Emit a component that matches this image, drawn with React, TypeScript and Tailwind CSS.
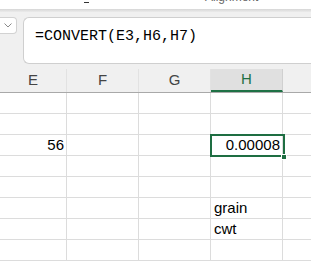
import React from "react";

const cols = ["E", "F", "G", "H"];
const rows: Record<number, Record<string, string>> = {
  2: { E: "56", H: "0.00008" },
  5: { H: "grain" },
  6: { H: "cwt" },
};

export default function App() {
  return (
    <div
      className="w-[311px] h-[265px] overflow-hidden bg-white relative"
      style={{ fontFamily: '"Liberation Sans", Arial, sans-serif' }}
    >
      {/* ribbon remnant */}
      <div className="h-[9px] bg-white relative overflow-hidden">
        <div className="absolute left-[84px] top-[2px] w-[5px] h-[1px] bg-[#333]" />
        <div className="absolute left-[205px] top-[-9px] text-[12px] text-[#666] leading-none">Alignment</div>
      </div>
      <div className="h-[3px] bg-gradient-to-b from-[#d6d6d6] to-[#ebebeb]" />
      {/* formula bar */}
      <div className="bg-[#f0f0f0] h-[57px] pt-[5px] flex items-start">
        <div className="w-[17px] h-[17px] bg-white border border-l-0 border-[#d2d2d2] rounded-r-[4px] flex items-center justify-center">
          <svg width="8" height="5" viewBox="0 0 8 5">
            <path d="M0.5 0.5 L4 4 L7.5 0.5" fill="none" stroke="#8a8a8a" strokeWidth="1" />
          </svg>
        </div>
        <div className="ml-[6px] flex-1 h-[47px] bg-white border border-r-0 border-[#cfcfcf] rounded-l-[6px] pl-[11px] pt-[5px]">
          <span
            className="text-[15px] text-black leading-[20px]"
            style={{ fontFamily: '"Liberation Mono", "DejaVu Sans Mono", monospace' }}
          >
            =CONVERT(<span className="text-black">E3,H6,H7</span>)
          </span>
        </div>
      </div>
      {/* headers */}
      <div className="flex h-[24px] bg-[#f0f0f0] border-b border-[#a9a9a9]">
        {cols.map((c, i) => (
          <div
            key={c}
            className={`${i === 0 ? "w-[67px]" : "w-[72px]"} shrink-0 h-full flex items-center justify-center text-[15px] border-r ${
              c === "H"
                ? "bg-[#e0e0e0] text-[#1e7145] border-[#d0d0d0] border-b-2 border-b-[#1e7145]"
                : "text-[#444] border-[#e2e2e2]"
            }`}
          >
            {c}
          </div>
        ))}
        <div className="flex-1" />
      </div>
      {/* grid */}
      <div className="relative">
        {Array.from({ length: 8 }).map((_, r) => (
          <div key={r} className="flex h-[21px] border-b border-[#dcdcdc]">
            {cols.map((c, i) => {
              const v = rows[r]?.[c];
              const isNum = v !== undefined && /^[0-9.]+$/.test(v);
              return (
                <div
                  key={c}
                  className={`${i === 0 ? "w-[67px]" : "w-[72px]"} shrink-0 h-full border-r border-[#dcdcdc] flex items-center text-[15px] text-black ${
                    isNum ? "justify-end pr-[2px]" : "justify-start pl-[3px]"
                  }`}
                >
                  {v}
                </div>
              );
            })}
            <div className="flex-1" />
          </div>
        ))}
        {/* selection */}
        <div className="absolute left-[210px] top-[41px] w-[75px] h-[23px] border-2 border-[#1e6e42]" />
        <div className="absolute left-[281px] top-[61px] w-[6px] h-[6px] bg-[#1e6e42] border border-white" />
      </div>
    </div>
  );
}
